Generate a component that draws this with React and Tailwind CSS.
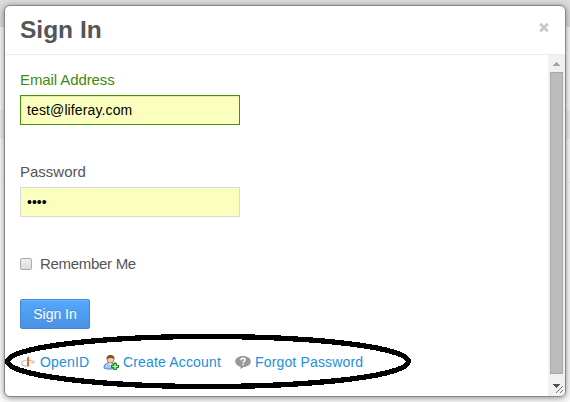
import React, { useState } from 'react';

const OpenIdIcon = () => (
  <svg width="16" height="16" viewBox="0 0 16 16" className="shrink-0">
    <path d="M6.500 6.400C3.300 6.700 1.600 7.800 1.600 9.200c0 1.700 2 2.700 5.400 2.900" fill="none" stroke="#c6c6c6" strokeWidth="1.400" />
    <path d="M9 6.300c1.700.1 2.900.5 3.800 1.300" fill="none" stroke="#c6c6c6" strokeWidth="1.400" />
    <path d="M14.300 6v3.200h-4z" fill="#c6c6c6" />
    <path d="M7 3.500l2-1V12l-2 1z" fill="#ff6512" />
  </svg>
);

const AddUserIcon = () => (
  <svg width="16" height="16" viewBox="0 0 16 16" className="shrink-0">
    <path d="M1 14c0-3.200 1.700-5 4.500-5h3c2.800 0 4 2 4 5-1.500 1.300-10 1.500-11.500 0z" fill="#a3cbf4" stroke="#3e74bd" strokeWidth=".9" />
    <path d="M5.200 9h4L7.300 11.500z" fill="#fff" />
    <circle cx="7.500" cy="5.700" r="3.300" fill="#f6cba2" stroke="#a96632" strokeWidth=".8" />
    <path d="M3.700 5.500C3.100 2.600 4.900 1 7.500 1s4.500 1.700 3.900 4.500c-1.500-1.500-4-1.700-5.500-1.200z" fill="#8b4e26" />
    <path d="M10.900 9h2.400v2.300h2.200v2.400h-2.200v2.200h-2.400v-2.200H8.600v-2.400h2.300z" fill="#4fdc48" stroke="#087b10" />
    <path d="M12.100 10v5M9.600 12.500h5" stroke="#d5ffc9" strokeWidth=".8" />
  </svg>
);

const HelpIcon = () => (
  <svg width="16" height="16" viewBox="0 0 16 16" className="shrink-0">
    <path d="M8 2c4.500 0 7.800 2.300 7.800 5.500S12.500 13 8.500 13c-1 1-2 1.600-3.500 1.900.4-.7.600-1.400.5-2.200C2.200 12 .200 10.100.200 7.500.200 4.300 3.500 2 8 2z" fill="#999" />
    <path d="M6 6.200C6 4.900 6.800 4.300 8 4.300s2.100.700 2.100 1.700c0 1.300-1.900 1.400-1.900 2.800M8.200 9.700v1.500" fill="none" stroke="#fff" strokeWidth="1.500" />
  </svg>
);

const links = [
  { label: 'OpenID', icon: OpenIdIcon, width: 'w-[83px]' },
  { label: 'Create Account', icon: AddUserIcon, width: 'w-[132px]' },
  { label: 'Forgot Password', icon: HelpIcon, width: 'w-[132px]' },
];

const Scrollbar = () => (
  <div className="flex w-[17px] shrink-0 flex-col items-center bg-[#f1f1f1]">
    <svg width="17" height="17" viewBox="0 0 17 17" shapeRendering="crispEdges">
      <path d="M5 11h7v-1h-1V9h-1V8H9V7H8v1H7v1H6v1H5z" fill="#a3a3a3" />
    </svg>
    <div className="h-[303px] w-[13px] border border-[#a8a8a8] bg-[#bcbcbc]" />
    <svg width="17" height="22" viewBox="0 0 17 22" shapeRendering="crispEdges">
      <path d="M5 10h7v1h-1v1h-1v1H9v1H8v-1H7v-1H6v-1H5z" fill="#505050" />
      <path d="M8 19l7-7M12 19l3-3" stroke="#777" strokeWidth="1" />
    </svg>
  </div>
);

const App = () => {
  const [email, setEmail] = useState('test@liferay.com');
  const [password, setPassword] = useState('test');
  const [remember, setRemember] = useState(false);

  return (
    <div className="relative h-[402px] w-[570px] overflow-hidden bg-[linear-gradient(#dcdcdc_0_27px,#f8f8f8_27px_110px,#eeeeee_110px_139px,#fafafa_139px_182px,#f0f0f0_182px_183px,#fafafa_183px)] pt-[5px] pl-1 font-['Liberation_Sans',Arial,sans-serif] text-[#555]">
      <div className="flex h-[392px] w-[562px] flex-col overflow-hidden rounded-md border border-[#888] bg-white shadow-[0_1px_6px_rgba(0,0,0,0.45)]">
        <header className="flex h-[49px] shrink-0 items-center justify-between border-b border-[#ebebeb] pr-[15px] pl-[15px]">
          <h1 className="text-[24.5px] leading-none font-bold">Sign In</h1>
          <button aria-label="Close" className="pb-[5px]">
            <svg width="12" height="11" viewBox="0 0 12 11">
              <path d="M2.200 1.700l7.600 7.600M9.800 1.700L2.200 9.300" stroke="#c8c8c8" strokeWidth="2.800" />
            </svg>
          </button>
        </header>

        <div className="flex min-h-0 flex-1">
          <form className="flex min-w-0 flex-1 flex-col items-start pt-[15px] pl-[15px]" onSubmit={(e) => e.preventDefault()}>
            <label htmlFor="email" className="h-[25px] text-[15px] leading-5 tracking-[-0.1px] text-[#3f8a0c]">Email Address</label>
            <input
              id="email"
              value={email}
              onChange={(e) => setEmail(e.target.value)}
              className="h-[30px] w-[220px] border border-[#469108] bg-[#faffbd] px-1.5 text-sm tracking-[0.12px] text-black shadow-[inset_0_1px_1px_rgba(0,0,0,0.075)] outline-none"
            />

            <label htmlFor="password" className="mt-[37px] h-[25px] text-[15px] leading-5">Password</label>
            <input
              id="password"
              type="password"
              value={password}
              onChange={(e) => setPassword(e.target.value)}
              className="h-[30px] w-[220px] border border-[#d9d9d9] bg-[#faffbd] px-1.5 text-sm text-black outline-none"
            />

            <label className="mt-[37px] flex h-5 items-center text-[15px] tracking-[-0.3px]">
              <input
                type="checkbox"
                checked={remember}
                onChange={(e) => setRemember(e.target.checked)}
                className="mr-2 h-3 w-3 appearance-none rounded-xs border border-[#aaa] bg-linear-to-b from-[#eee] to-[#ddd] checked:bg-[#469be8]"
              />
              Remember Me
            </label>

            <button className="mt-[25px] h-[30px] w-[70px] rounded-xs border border-[#3e87d7] bg-linear-to-b from-[#54a9ff] to-[#4a91e2] text-sm text-white shadow-[inset_0_1px_0_rgba(255,255,255,0.2)] [text-shadow:0_-1px_0_rgba(0,0,0,0.2)]">Sign In</button>

            <nav className="mt-[23px] flex h-5 text-sm tracking-[0.16px] text-[#1a90df]">
              {links.map(({ label, icon: Icon, width }) => (
                <a key={label} href="#" className={`flex items-center gap-1 whitespace-nowrap ${width}`}>
                  <Icon />
                  {label}
                </a>
              ))}
            </nav>
          </form>
          <Scrollbar />
        </div>
      </div>

      {/* Marker ring around the sign-in links */}
      <svg className="pointer-events-none absolute top-0 left-0" width="570" height="402" viewBox="0 0 570 402" shapeRendering="crispEdges">
        <ellipse cx="208" cy="361.500" rx="200.500" ry="25" fill="none" stroke="#000" strokeWidth="5.300" />
      </svg>
    </div>
  );
};

export default App;
